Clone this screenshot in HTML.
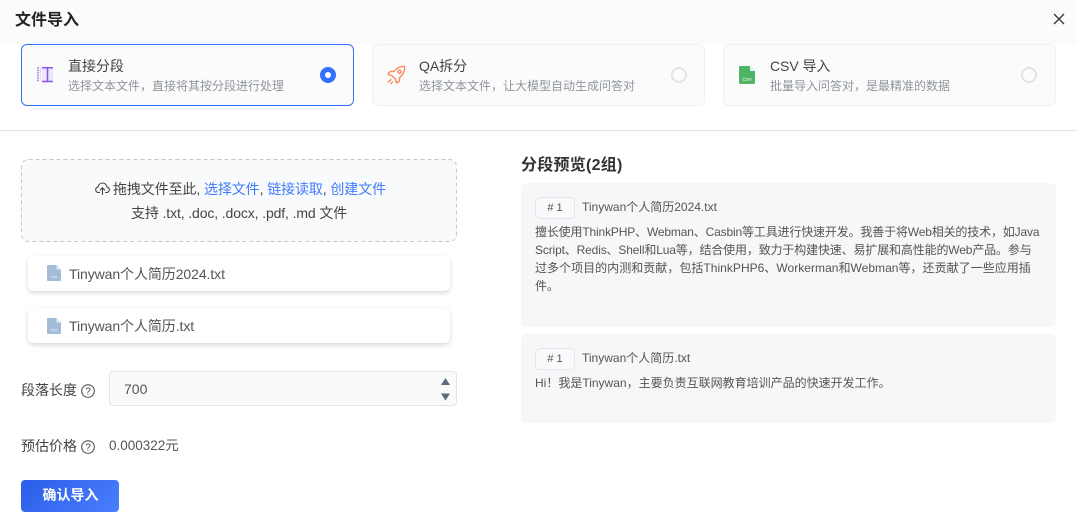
<!DOCTYPE html>
<html lang="zh"><head><meta charset="utf-8"><title>文件导入</title>
<style>
*{box-sizing:border-box}
html,body{margin:0;padding:0;background:#fff}
body{width:1077px;height:528px;position:relative;overflow:hidden;font-family:"Liberation Sans","Noto Sans CJK SC",sans-serif;color:#333}
.a{position:absolute;white-space:nowrap}
.card{position:absolute;top:44px;width:333px;height:62px;border-radius:6px;background:#fbfbfc;border:1px solid #f0f1f3}
.radio{position:absolute;top:67px;width:16px;height:16px;border-radius:50%;border:2px solid #e2e3e5;background:#fbfbfc}
.t{font-size:14px;line-height:18px;color:#444;letter-spacing:-.05px}
.s{font-size:12px;line-height:18px;color:#8f949c}
.file{position:absolute;left:28px;width:422px;height:35px;background:#fff;border-radius:5px;box-shadow:0 2px 5px rgba(0,0,0,.16)}
.box{position:absolute;left:521px;width:535px;background:#f6f7f9;border-radius:6px}
.tag{position:absolute;left:535px;width:40px;height:22px;border:1px solid #e4e6e9;border-radius:5px;background:#f9fafb;font-size:11px;line-height:20px;text-align:center;color:#555}
.p{position:absolute;left:535px;width:512px;font-size:12px;line-height:18px;color:#555}
</style></head><body>
<div class="a" style="left:0;top:0;width:1077px;height:44px;background:#fbfbfc"></div>
<div class="a" style="left:15px;top:9px;font-size:16px;line-height:23px;font-weight:700;color:#222">文件导入</div>
<svg class="a" style="left:1053px;top:13px" width="12" height="12" viewBox="0 0 12 12"><path d="M1 1L11 11M11 1L1 11" stroke="#333" stroke-width="1.300" fill="none"/></svg>

<div class="card" style="left:21px;border-color:#3370ff"></div>
<svg class="a" style="left:36px;top:66px" width="18" height="18" viewBox="0 0 18 18"><rect x="6" y="1" width="11" height="15" fill="#ece6fb"/><path d="M1 2h2M1 4.500h2M1 7h2M1 9.500h2M1 12h2M1 14.500h2" stroke="#a98af0" stroke-width="1.500"/><path d="M4.500 2v13" stroke="#cdbdf6" stroke-width="1" stroke-dasharray="1.500 1"/><path d="M6 1.800h11M6 15.500h11" stroke="#8a55e6" stroke-width="1.500"/><path d="M11.500 2v13" stroke="#8a55e6" stroke-width="1.500"/></svg>
<div class="a t" style="left:68px;top:57px">直接分段</div>
<div class="a s" style="left:68px;top:77px">选择文本文件，直接将其按分段进行处理</div>
<div class="a" style="left:320px;top:67px;width:16px;height:16px;border-radius:50%;background:#fff;border:5px solid #3370ff"></div>

<div class="card" style="left:372px"></div>
<svg class="a" style="left:387px;top:65px" width="19" height="20" viewBox="0 0 19 20" fill="none" stroke="#f98a5e" stroke-width="1.400" stroke-linejoin="round" stroke-linecap="round"><path d="M17.500 1.500C13.500 1 9.500 3 7 6.500L3.500 6.500C3 6.500 2.700 6.700 2.500 7L1 9.500 4.800 10.500 8.500 14.200 9.500 18 12 16.500C12.300 16.300 12.500 16 12.500 15.500L12.500 12.500C16 10 18 6 17.500 1.500Z"/><circle cx="12.500" cy="6.700" r="1.600"/><path d="M1.500 17L4 14.500M4 18.500L5.500 17"/></svg>
<div class="a t" style="left:419px;top:57px">QA拆分</div>
<div class="a s" style="left:419px;top:77px">选择文本文件，让大模型自动生成问答对</div>
<div class="radio" style="left:671px"></div>

<div class="card" style="left:723px"></div>
<svg class="a" style="left:739px;top:66px" width="16" height="18" viewBox="0 0 16 18"><path d="M1.500 0H11L16 5V16.500A1.500 1.500 0 0 1 14.500 18H1.500A1.500 1.500 0 0 1 0 16.500V1.500A1.500 1.500 0 0 1 1.500 0Z" fill="#4fb565"/><path d="M11 0L16 5H11Z" fill="#e4f4e8"/><text x="8" y="15" font-size="4.500" font-weight="700" text-anchor="middle" fill="#d8f0dd" font-family="Liberation Sans">CSV</text></svg>
<div class="a t" style="left:770px;top:57px">CSV 导入</div>
<div class="a s" style="left:770px;top:77px">批量导入问答对，是最精准的数据</div>
<div class="radio" style="left:1021px"></div>

<div class="a" style="left:0;top:130px;width:1077px;height:1px;background:#e3e4e6"></div>

<svg class="a" style="left:21px;top:159px" width="436" height="83" viewBox="0 0 436 83"><rect x=".5" y=".5" width="435" height="82" rx="7" fill="#f9fafc" stroke="#c6c8cb" stroke-dasharray="4 3"/></svg>
<svg class="a" style="left:95px;top:182px" width="15" height="13" viewBox="0 0 15 13" fill="none" stroke="#444" stroke-width="1.100" stroke-linecap="round" stroke-linejoin="round"><path d="M4.500 10.500H3.500C1.800 10.500.7 9.300.7 7.800C.7 6.400 1.700 5.300 3 5.100C3.300 2.700 5.200 1 7.500 1C9.800 1 11.700 2.700 12 5.100C13.300 5.300 14.300 6.400 14.300 7.800C14.300 9.300 13.200 10.500 11.500 10.500H10.500"/><path d="M7.500 12.500V6M5.300 8L7.500 5.800L9.700 8"/></svg>
<div class="a" style="left:113px;top:179px;font-size:14px;line-height:20px;color:#444;letter-spacing:-.1px">拖拽文件至此, <span style="color:#3f7bff">选择文件</span>, <span style="color:#3f7bff">链接读取</span>, <span style="color:#3f7bff">创建文件</span></div>
<div class="a" style="left:131px;top:203px;font-size:14px;line-height:20px;color:#444;letter-spacing:-.12px">支持 .txt, .doc, .docx, .pdf, .md 文件</div>

<div class="file" style="top:256px"></div>
<svg class="a" style="left:47px;top:265px" width="14" height="16" viewBox="0 0 14 16"><path d="M1 0H9.500L14 4.500V15A1 1 0 0 1 13 16H1A1 1 0 0 1 0 15V1A1 1 0 0 1 1 0Z" fill="#a3bdd8"/><path d="M9.500 0L14 4.500H9.500Z" fill="#e3ebf4"/><text x="7" y="13.500" font-size="3.500" font-weight="700" text-anchor="middle" fill="#e3ebf4" font-family="Liberation Sans">TXT</text></svg>
<div class="a" style="left:69px;top:264px;font-size:14px;line-height:20px;color:#555;letter-spacing:-.08px">Tinywan个人简历2024.txt</div>

<div class="file" style="top:308px"></div>
<svg class="a" style="left:47px;top:318px" width="14" height="16" viewBox="0 0 14 16"><path d="M1 0H9.500L14 4.500V15A1 1 0 0 1 13 16H1A1 1 0 0 1 0 15V1A1 1 0 0 1 1 0Z" fill="#a3bdd8"/><path d="M9.500 0L14 4.500H9.500Z" fill="#e3ebf4"/><text x="7" y="13.500" font-size="3.500" font-weight="700" text-anchor="middle" fill="#e3ebf4" font-family="Liberation Sans">TXT</text></svg>
<div class="a" style="left:69px;top:316px;font-size:14px;line-height:20px;color:#555;letter-spacing:-.08px">Tinywan个人简历.txt</div>

<div class="a" style="left:21px;top:380px;font-size:14px;line-height:20px;color:#444">段落长度</div>
<svg class="a" style="left:81px;top:384px" width="14" height="14" viewBox="0 0 14 14"><circle cx="7" cy="7" r="6.300" fill="none" stroke="#444" stroke-width="1"/><text x="7" y="10.500" font-size="10" text-anchor="middle" fill="#444" font-family="Liberation Sans">?</text></svg>
<div class="a" style="left:109px;top:371px;width:348px;height:35px;border:1px solid #e2e3e6;border-radius:4px;background:#fafafb"></div>
<div class="a" style="left:124px;top:379px;font-size:14px;line-height:20px;color:#555">700</div>
<svg class="a" style="left:440px;top:377px" width="11" height="24" viewBox="0 0 11 24"><path d="M1 8L5.500 1L10 8Z" fill="#5f6b7a"/><path d="M1 16.500L5.500 23.500L10 16.500Z" fill="#5f6b7a"/></svg>

<div class="a" style="left:21px;top:436px;font-size:14px;line-height:20px;color:#444">预估价格</div>
<svg class="a" style="left:81px;top:440px" width="14" height="14" viewBox="0 0 14 14"><circle cx="7" cy="7" r="6.300" fill="none" stroke="#444" stroke-width="1"/><text x="7" y="10.500" font-size="10" text-anchor="middle" fill="#444" font-family="Liberation Sans">?</text></svg>
<div class="a" style="left:109px;top:436px;font-size:13.500px;line-height:20px;color:#555">0.000322元</div>

<div class="a" style="left:21px;top:480px;width:98px;height:32px;border-radius:4px;background:linear-gradient(135deg,#2a5ee8,#4a7fff);color:#fff;font-size:14px;font-weight:700;line-height:30px;text-align:center;padding-left:1px">确认导入</div>

<div class="a" style="left:521px;top:155px;font-size:16px;line-height:22px;font-weight:700;color:#333;letter-spacing:.25px">分段预览(2组)</div>

<div class="box" style="top:183px;height:144px"></div>
<div class="tag" style="top:197px"># 1</div>
<div class="a" style="left:582px;top:198px;font-size:12px;line-height:18px;color:#555">Tinywan个人简历2024.txt</div>
<div class="a p" style="top:223px;letter-spacing:-.16px">擅长使用ThinkPHP、Webman、Casbin等工具进行快速开发。我善于将Web相关的技术，如Java</div>
<div class="a p" style="top:241px;letter-spacing:-.15px">Script、Redis、Shell和Lua等，结合使用，致力于构建快速、易扩展和高性能的Web产品。参与</div>
<div class="a p" style="top:259px;letter-spacing:.03px">过多个项目的内测和贡献，包括ThinkPHP6、Workerman和Webman等，还贡献了一些应用插</div>
<div class="a p" style="top:277px">件。</div>

<div class="box" style="top:334px;height:89px"></div>
<div class="tag" style="top:348px"># 1</div>
<div class="a" style="left:582px;top:349px;font-size:12px;line-height:18px;color:#555">Tinywan个人简历.txt</div>
<div class="a p" style="top:374px">Hi！我是Tinywan，主要负责互联网教育培训产品的快速开发工作。</div>
</body></html>
